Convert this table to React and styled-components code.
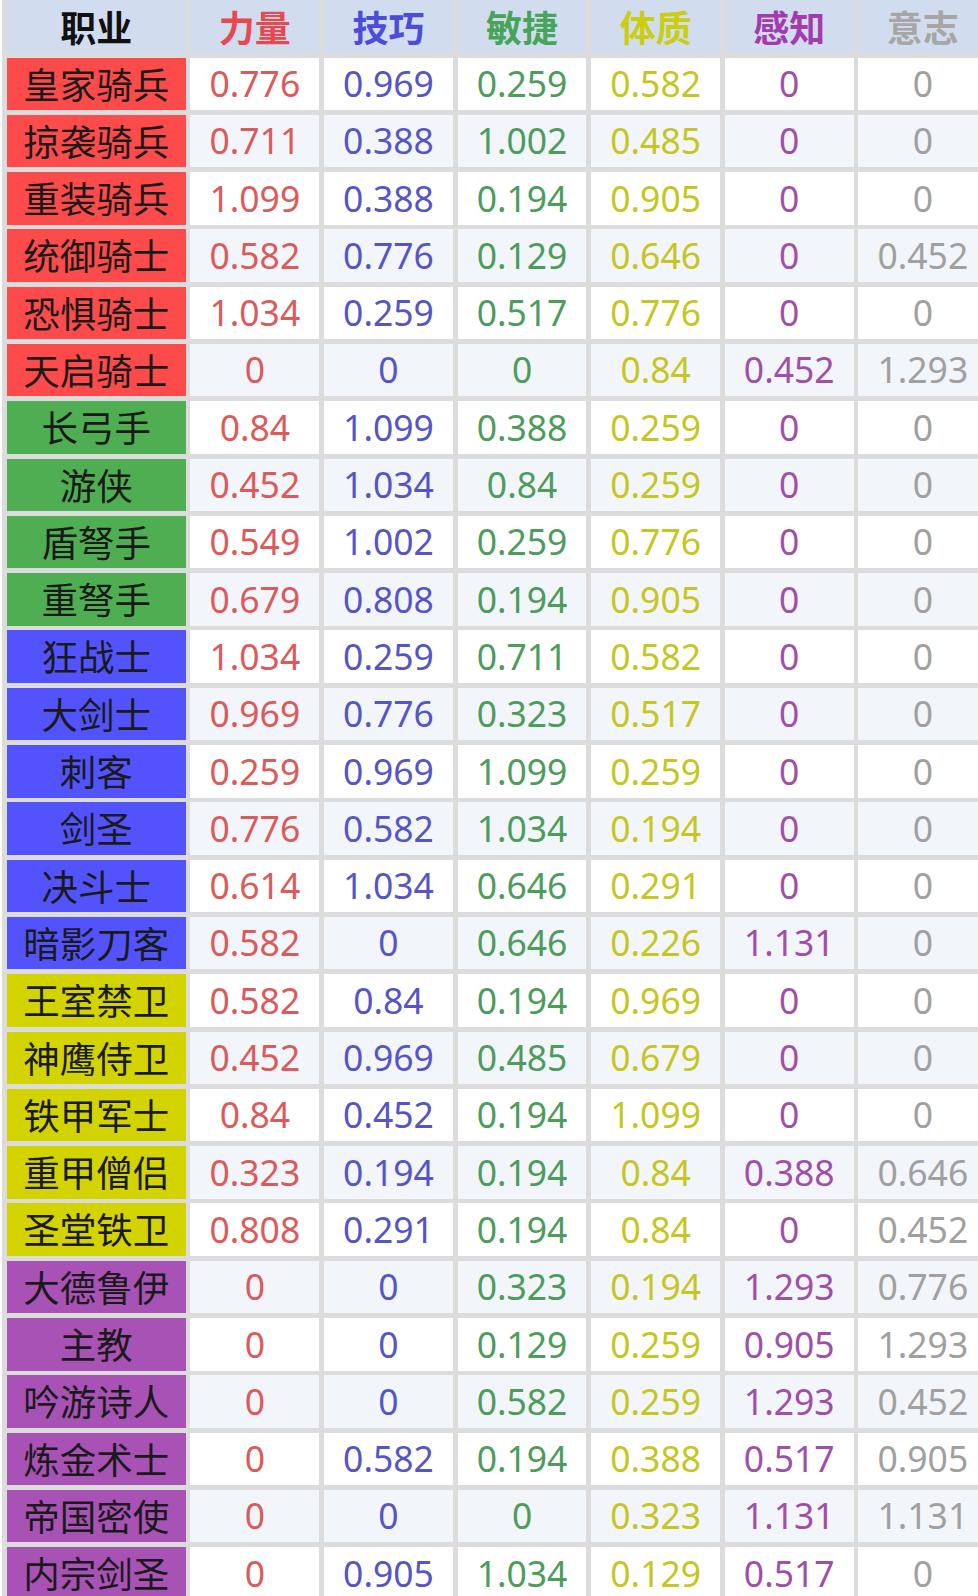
import React from "react";
import styled, { createGlobalStyle } from "styled-components";

const GlobalStyle = createGlobalStyle`
  html, body {
    margin: 0;
    padding: 0;
    background: #ffffff;
    overflow: hidden;
  }
  body {
    font-family: "Noto Sans", "Noto Sans CJK SC", sans-serif;
  }
`;

const Viewport = styled.div`
  width: 978px;
  height: 1596px;
  overflow: hidden;
  background: #ffffff;
`;

const Grid = styled.div`
  display: grid;
  grid-template-columns: 178.7px repeat(6, 128.8px);
  grid-auto-rows: 52.5px;
  gap: 4.8px;
  padding: 4.8px;
  margin: -4.6px 0 0 2.2px;
  width: max-content;
  background: #dcdcdc;
`;

const Cell = styled.div`
  display: flex;
  align-items: center;
  justify-content: center;
  white-space: nowrap;
  line-height: 1;
`;

const HeadCell = styled(Cell)`
  background: #d1ddef;
  color: ${(p) => p.$color};
  font-size: 36px;
  font-weight: 700;
  font-family: "Noto Sans CJK SC", sans-serif;
`;

const NameCell = styled(Cell)`
  background: ${(p) => p.$bg};
  color: #1a1a1a;
  font-size: 36.5px;
  font-family: "Noto Sans CJK SC", sans-serif;
`;

const ValueCell = styled(Cell)`
  background: ${(p) => (p.$alt ? "#f2f5fa" : "#ffffff")};
  color: ${(p) => p.$color};
  font-size: 35.5px;
  font-family: "Noto Sans", sans-serif;
`;

const CLASS_BG = {
  red: "#fd4a4a",
  green: "#4fad52",
  blue: "#5353fd",
  yellow: "#d3d300",
  purple: "#a852b6",
};

const HEADERS = [
  { label: "职业", color: "#111111" },
  { label: "力量", color: "#e8484e" },
  { label: "技巧", color: "#4b4bdc" },
  { label: "敏捷", color: "#48a45a" },
  { label: "体质", color: "#cccc12" },
  { label: "感知", color: "#a23cae" },
  { label: "意志", color: "#a6a6a6" },
];

const VALUE_COLORS = ["#dc5a5a", "#5555c8", "#4c9c5c", "#c6c622", "#a04fa8", "#a0a0a0"];

const ROWS = [
  ["皇家骑兵", "red", "0.776", "0.969", "0.259", "0.582", "0", "0"],
  ["掠袭骑兵", "red", "0.711", "0.388", "1.002", "0.485", "0", "0"],
  ["重装骑兵", "red", "1.099", "0.388", "0.194", "0.905", "0", "0"],
  ["统御骑士", "red", "0.582", "0.776", "0.129", "0.646", "0", "0.452"],
  ["恐惧骑士", "red", "1.034", "0.259", "0.517", "0.776", "0", "0"],
  ["天启骑士", "red", "0", "0", "0", "0.84", "0.452", "1.293"],
  ["长弓手", "green", "0.84", "1.099", "0.388", "0.259", "0", "0"],
  ["游侠", "green", "0.452", "1.034", "0.84", "0.259", "0", "0"],
  ["盾弩手", "green", "0.549", "1.002", "0.259", "0.776", "0", "0"],
  ["重弩手", "green", "0.679", "0.808", "0.194", "0.905", "0", "0"],
  ["狂战士", "blue", "1.034", "0.259", "0.711", "0.582", "0", "0"],
  ["大剑士", "blue", "0.969", "0.776", "0.323", "0.517", "0", "0"],
  ["刺客", "blue", "0.259", "0.969", "1.099", "0.259", "0", "0"],
  ["剑圣", "blue", "0.776", "0.582", "1.034", "0.194", "0", "0"],
  ["决斗士", "blue", "0.614", "1.034", "0.646", "0.291", "0", "0"],
  ["暗影刀客", "blue", "0.582", "0", "0.646", "0.226", "1.131", "0"],
  ["王室禁卫", "yellow", "0.582", "0.84", "0.194", "0.969", "0", "0"],
  ["神鹰侍卫", "yellow", "0.452", "0.969", "0.485", "0.679", "0", "0"],
  ["铁甲军士", "yellow", "0.84", "0.452", "0.194", "1.099", "0", "0"],
  ["重甲僧侣", "yellow", "0.323", "0.194", "0.194", "0.84", "0.388", "0.646"],
  ["圣堂铁卫", "yellow", "0.808", "0.291", "0.194", "0.84", "0", "0.452"],
  ["大德鲁伊", "purple", "0", "0", "0.323", "0.194", "1.293", "0.776"],
  ["主教", "purple", "0", "0", "0.129", "0.259", "0.905", "1.293"],
  ["吟游诗人", "purple", "0", "0", "0.582", "0.259", "1.293", "0.452"],
  ["炼金术士", "purple", "0", "0.582", "0.194", "0.388", "0.517", "0.905"],
  ["帝国密使", "purple", "0", "0", "0", "0.323", "1.131", "1.131"],
  ["内宗剑圣", "purple", "0", "0.905", "1.034", "0.129", "0.517", "0"],
];

export default function App() {
  return (
    <Viewport>
      <GlobalStyle />
      <Grid role="table">
        {HEADERS.map((h) => (
          <HeadCell key={h.label} role="columnheader" $color={h.color}>
            {h.label}
          </HeadCell>
        ))}
        {ROWS.map(([name, cls, ...vals], r) => (
          <React.Fragment key={name}>
            <NameCell role="rowheader" $bg={CLASS_BG[cls]}>
              {name}
            </NameCell>
            {vals.map((v, c) => (
              <ValueCell key={c} role="cell" $alt={r % 2 === 1} $color={VALUE_COLORS[c]}>
                {v}
              </ValueCell>
            ))}
          </React.Fragment>
        ))}
      </Grid>
    </Viewport>
  );
}
